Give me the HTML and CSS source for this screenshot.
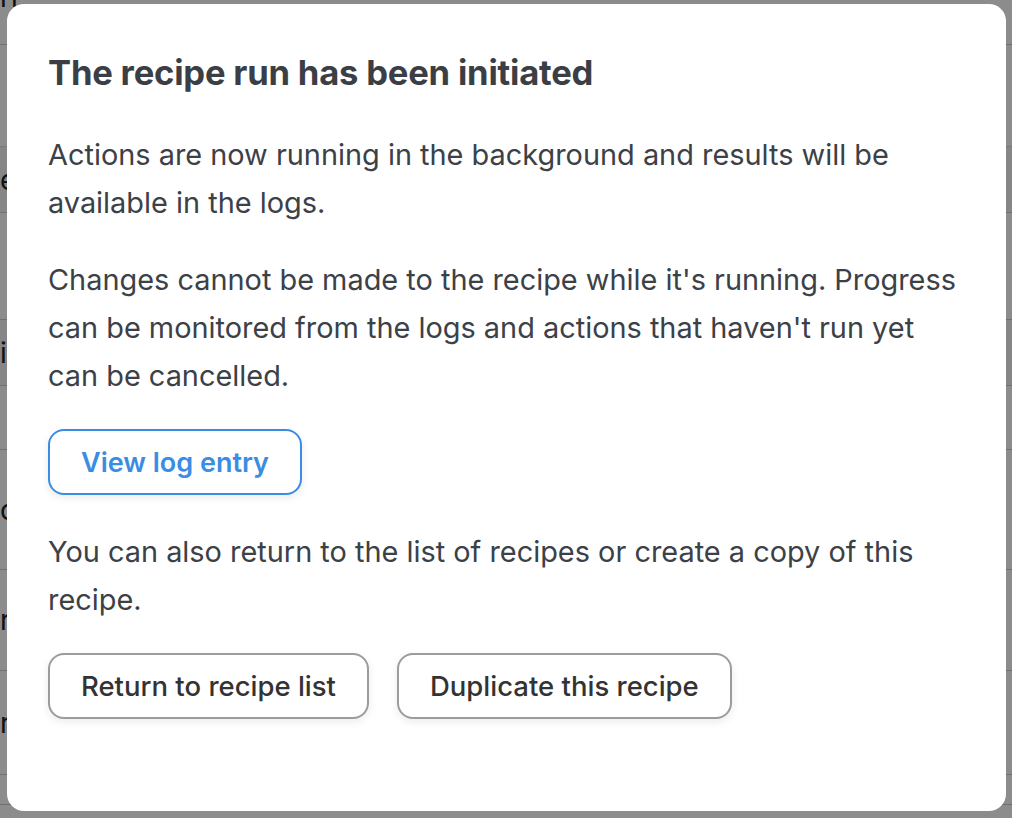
FILE: index.html
```html
<!DOCTYPE html>
<html lang="en">
<head>
<meta charset="utf-8">
<title>Recipe run initiated</title>
<link rel="stylesheet" href="styles.css">
</head>
<body>
<div class="page">
  <div class="bg-top"><span class="bg-txt">ri</span></div>
  <div class="bg-band"></div>
  <div class="bg-row h66"><span class="bg-txt">e</span></div>
  <div class="bg-row h107"></div>
  <div class="bg-row h66"><span class="bg-txt">ic</span></div>
  <div class="bg-row h64"></div>
  <div class="bg-row h120"><span class="bg-txt">o</span></div>
  <div class="bg-row h101"><span class="bg-txt">r</span></div>
  <div class="bg-row h104"><span class="bg-txt">r</span></div>
  <div class="bg-row h30"></div>
  <div class="bg-last"><span class="bg-txt">cers</span><span class="bg-cell"></span></div>
</div>

<div class="overlay">
  <div class="modal" role="dialog" aria-labelledby="modal-title">
    <h2 class="modal-title" id="modal-title">The recipe run has been initiated</h2>
    <p class="modal-text">Actions are now running in the background and results will be available in the logs.</p>
    <p class="modal-text">Changes cannot be made to the recipe while it's running. Progress can be monitored from the logs and actions that haven't run yet can be cancelled.</p>
    <div class="actions">
      <button class="btn btn-primary" type="button">View log entry</button>
    </div>
    <p class="modal-text">You can also return to the list of recipes or create a copy of this recipe.</p>
    <div class="actions">
      <button class="btn" type="button">Return to recipe list</button>
      <button class="btn" type="button">Duplicate this recipe</button>
    </div>
  </div>
</div>
</body>
</html>
```

FILE: styles.css
```css
* { box-sizing: border-box; }

html, body {
  margin: 0;
  padding: 0;
  height: 100%;
}

body {
  font-family: Inter, "Noto Sans", "Liberation Sans", sans-serif;
  color: #222;
  background: #fff;
  overflow: hidden;
}

/* background page, mostly hidden under the overlay */
.page {
  height: 100vh;
  overflow: hidden;
  font-size: 28px;
  color: #222;
}

.bg-txt {
  white-space: nowrap;
  line-height: 30px;
}

.bg-top {
  height: 63px;
  border-bottom: 1px solid #ccc;
}

.bg-top .bg-txt {
  display: block;
  margin-top: -18px;
}

.bg-band {
  height: 102px;
  border-bottom: 1px solid #ddd;
}

.bg-row {
  border-bottom: 1px solid #ccc;
  display: flex;
  align-items: center;
}

.h66 { height: 66px; background: #f4f4f4; }
.h107 { height: 107px; }
.h64 { height: 64px; }
.h120 { height: 120px; }
.h101 { height: 101px; }
.h104 { height: 104px; }
.h30 { height: 30px; }

.bg-last {
  display: flex;
  align-items: flex-end;
  height: 60px;
}

.bg-cell {
  display: inline-block;
  width: 1px;
  height: 30px;
  background: #bbb;
  margin-left: 16px;
}

/* overlay + modal */
.overlay {
  position: fixed;
  inset: 0;
  background: rgba(0, 0, 0, 0.45);
  padding: 4px 6px 7px 7px;
  display: flex;
}

.modal {
  flex: 1;
  background: #fff;
  border-radius: 17px;
  padding: 48px 44px 40px 41px;
  color: #3c4148;
}

.modal-title {
  margin: 0 0 39px;
  font-size: 34.6px;
  line-height: 40px;
  font-weight: 700;
  color: #3b3f45;
  letter-spacing: -0.2px;
}

.modal-text {
  margin: 0 0 29px;
  font-size: 28.9px;
  line-height: 48px;
  font-weight: 400;
  color: #3c4148;
}

.actions {
  display: flex;
  gap: 28px;
  margin: 2px 0 33px;
}

.btn {
  font-family: inherit;
  height: 66px;
  padding: 0 31px;
  font-size: 27.5px;
  font-weight: 500;
  color: #333;
  background: #fff;
  border: 2px solid #9c9c9c;
  border-radius: 16px;
  box-shadow: 0 3px 8px rgba(0, 0, 0, 0.08);
  cursor: pointer;
}

.btn-primary {
  font-size: 27px;
  color: #3a8de2;
  border-color: #3a8de2;
  font-weight: 600;
}
```
